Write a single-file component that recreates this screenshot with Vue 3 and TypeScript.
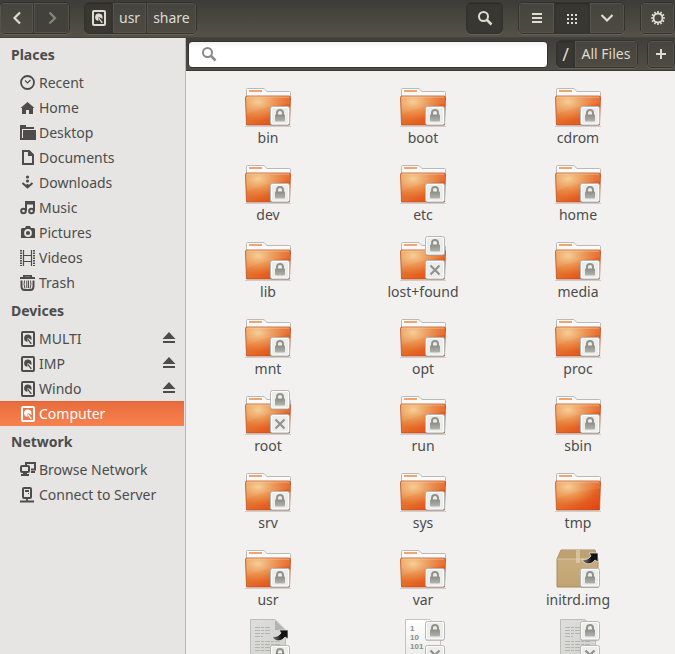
<script setup lang="ts">
import { ref } from 'vue'

interface Place {
  name: string
  icon: string
  eject?: boolean
}
interface Section {
  title: string
  places: Place[]
}
interface Entry {
  name: string
  kind: 'folder' | 'package' | 'text' | 'binary'
  top?: 'lock' | 'link'
  bottom?: 'lock' | 'cross'
}

const sections: Section[] = [
  {
    title: 'Places',
    places: [
      { name: 'Recent', icon: 'clock' },
      { name: 'Home', icon: 'home' },
      { name: 'Desktop', icon: 'desktop' },
      { name: 'Documents', icon: 'document' },
      { name: 'Downloads', icon: 'download' },
      { name: 'Music', icon: 'music' },
      { name: 'Pictures', icon: 'camera' },
      { name: 'Videos', icon: 'film' },
      { name: 'Trash', icon: 'trash' },
    ],
  },
  {
    title: 'Devices',
    places: [
      { name: 'MULTI', icon: 'disk', eject: true },
      { name: 'IMP', icon: 'disk', eject: true },
      { name: 'Windo', icon: 'disk', eject: true },
      { name: 'Computer', icon: 'disk' },
    ],
  },
  {
    title: 'Network',
    places: [
      { name: 'Browse Network', icon: 'network' },
      { name: 'Connect to Server', icon: 'server' },
    ],
  },
]

const folder = (name: string): Entry => ({ name, kind: 'folder', bottom: 'lock' })
const closedFolder = (name: string): Entry => ({ name, kind: 'folder', top: 'lock', bottom: 'cross' })

const entries: Entry[] = [
  ...['bin', 'boot', 'cdrom', 'dev', 'etc', 'home', 'lib'].map(folder),
  closedFolder('lost+found'),
  ...['media', 'mnt', 'opt', 'proc'].map(folder),
  closedFolder('root'),
  ...['run', 'sbin', 'srv', 'sys'].map(folder),
  { name: 'tmp', kind: 'folder' },
  folder('usr'),
  folder('var'),
  { name: 'initrd.img', kind: 'package', top: 'link', bottom: 'lock' },
  { name: '', kind: 'text', top: 'link', bottom: 'lock' },
  { name: '', kind: 'binary', top: 'lock', bottom: 'cross' },
  { name: '', kind: 'text', top: 'lock', bottom: 'cross' },
]

const current = ref('Computer')
const query = ref('')
</script>

<template>
  <svg class="defs" aria-hidden="true">
    <defs>
      <linearGradient id="folderFront" x1="0" y1="0" x2="1" y2="1">
        <stop offset="0" stop-color="#e58a3c" />
        <stop offset=".5" stop-color="#e56c2a" />
        <stop offset="1" stop-color="#e2400f" />
      </linearGradient>
      <radialGradient id="folderGlow" cx=".28" cy=".2" r=".65">
        <stop offset="0" stop-color="#f7d49a" stop-opacity=".9" />
        <stop offset="1" stop-color="#f0a860" stop-opacity="0" />
      </radialGradient>
      <linearGradient id="paper" x1="0" y1="0" x2="0" y2="1">
        <stop offset="0" stop-color="#fff" />
        <stop offset="1" stop-color="#e6e6e4" />
      </linearGradient>
      <linearGradient id="greyPaper" x1="0" y1="0" x2="1" y2="1">
        <stop offset="0" stop-color="#dededc" />
        <stop offset="1" stop-color="#cfcfcc" />
      </linearGradient>
      <linearGradient id="carton" x1="0" y1="0" x2="0" y2="1">
        <stop offset="0" stop-color="#cbb082" />
        <stop offset="1" stop-color="#c2a473" />
      </linearGradient>
      <linearGradient id="glyph" x1="0" y1="0" x2="0" y2="1">
        <stop offset="0" stop-color="#8d8d88" />
        <stop offset="1" stop-color="#b3b3ae" />
      </linearGradient>
      <linearGradient id="arrow" x1="0" y1="0" x2="1" y2="0">
        <stop offset="0" stop-color="#888" />
        <stop offset=".6" stop-color="#111" />
      </linearGradient>
    </defs>

    <symbol id="clock" viewBox="0 0 16 16">
      <circle cx="7.5" cy="7.5" r="6.5" fill="none" stroke="currentColor" stroke-width="1.8" />
      <path d="M5 5.5 7.5 8l3-3" fill="none" stroke="currentColor" stroke-width="1.2" />
    </symbol>
    <symbol id="home" viewBox="0 0 16 16">
      <path d="M7.5 2 .5 8H2v6h4v-4h3v4h4V8h1.500Z" fill="currentColor" />
    </symbol>
    <symbol id="desktop" viewBox="0 0 16 16">
      <path d="M0 0h6v2h8v2H2v9h1V5h13v10H0Z" fill="currentColor" />
    </symbol>
    <symbol id="document" viewBox="0 0 16 16">
      <path d="M3 1h6l4 4v9H3Z" fill="none" stroke="currentColor" stroke-width="2" />
      <path d="M8 1v5h5V4L10 1Z" fill="currentColor" />
    </symbol>
    <symbol id="download" viewBox="0 0 16 16">
      <circle cx="7.5" cy="2" r="1.600" fill="currentColor" />
      <circle cx="7.5" cy="6" r="1.600" fill="currentColor" />
      <path d="M2.500 8 7.500 12.500l5-4.500M7.500 9v3" fill="none" stroke="currentColor" stroke-width="2" />
    </symbol>
    <symbol id="music" viewBox="0 0 16 16">
      <path d="M6 11V2h8v9M6 3.500h8" fill="none" stroke="currentColor" stroke-width="2" />
      <circle cx="3.500" cy="11" r="2.300" fill="none" stroke="currentColor" stroke-width="2" />
      <circle cx="11.500" cy="11" r="2.300" fill="none" stroke="currentColor" stroke-width="2" />
    </symbol>
    <symbol id="camera" viewBox="0 0 16 16">
      <path d="M2 3h3l1-2h4l1 2h3l1 1v9H1V4Z" fill="currentColor" />
      <circle cx="8" cy="8" r="3" fill="none" stroke="#e6e5e3" stroke-width="1.800" />
    </symbol>
    <symbol id="film" viewBox="0 0 16 16">
      <path d="M1 0v16M14 0v16" stroke="currentColor" stroke-width="2" stroke-dasharray="1.500 1" />
      <path d="M3.500 0v16M11.500 0v16M4 5.500h7.500M4 11.500h7.500" stroke="currentColor" stroke-width="1.200" fill="none" />
    </symbol>
    <symbol id="trash" viewBox="0 0 16 16">
      <path d="M4 2V.800h7V2M0 3h15" fill="none" stroke="currentColor" stroke-width="2" />
      <path d="M1.500 5.500v5.500q0 4 3 4h6q3 0 3-4V5.500" fill="none" stroke="currentColor" stroke-width="2" />
      <path d="M4.500 5.500q-1 4 .500 8M10.500 5.500q1 4-.500 8M6.800 5.500v7.500M8.500 5.500v7.500" fill="none" stroke="currentColor" />
    </symbol>
    <symbol id="disk" viewBox="0 0 16 16">
      <rect x="2" y="1" width="12" height="14" rx="1" fill="none" stroke="currentColor" stroke-width="2" />
      <path d="M7.500 10.800A3.700 3.700 0 1 1 11.500 7.500V9l-2.500-1.500-1.500-.500Z" fill="currentColor" />
      <path d="m7.500 7 4.500 5.500-1.500.500L8 9.500Z" fill="currentColor" />
    </symbol>
    <symbol id="network" viewBox="0 0 16 16">
      <path d="M6 3V1h9v6.500h-4" fill="none" stroke="currentColor" stroke-width="2" />
      <rect x="1" y="4" width="8" height="6" rx="1" fill="none" stroke="currentColor" stroke-width="2" />
      <path d="M3 10h4v2h2v2H1v-2h2ZM11 9h4v2h-4Z" fill="currentColor" />
    </symbol>
    <symbol id="server" viewBox="0 0 16 16">
      <rect x="3" y="1" width="8" height="10" rx="1" fill="none" stroke="currentColor" stroke-width="2" />
      <path d="M5 4h4M7 11v3M0 14.500h14" stroke="currentColor" stroke-width="1.800" />
      <path d="M8 6h1v1H8Z" fill="currentColor" />
    </symbol>
    <symbol id="eject" viewBox="0 0 16 16">
      <path d="M8 1 14.500 8h-13ZM2 10h12v2H2Z" fill="currentColor" />
    </symbol>
    <symbol id="chevronLeft" viewBox="0 0 16 16">
      <path d="M11 2.500 5.500 8l5.500 5.500" fill="none" stroke="currentColor" stroke-width="2.200" />
    </symbol>
    <symbol id="chevronRight" viewBox="0 0 16 16">
      <path d="M5.500 2.500 11 8l-5.500 5.500" fill="none" stroke="currentColor" stroke-width="2.200" />
    </symbol>
    <symbol id="chevronDown" viewBox="0 0 16 16">
      <path d="M2.500 5 8 10.500 13.500 5" fill="none" stroke="currentColor" stroke-width="2.200" />
    </symbol>
    <symbol id="search" viewBox="0 0 16 16">
      <circle cx="6.500" cy="6.500" r="4.500" fill="none" stroke="currentColor" stroke-width="2" />
      <path d="m9.500 9.500 5 5" stroke="currentColor" stroke-width="2.500" />
    </symbol>
    <symbol id="list" viewBox="0 0 16 16">
      <path d="M3 4h10M3 8h10M3 12h10" stroke="currentColor" stroke-width="2" />
    </symbol>
    <symbol id="dots" viewBox="0 0 16 16">
      <path d="M3 4h2v2H3ZM7 4h2v2H7ZM11 4h2v2h-2ZM3 8h2v2H3ZM7 8h2v2H7ZM11 8h2v2h-2ZM3 12h2v2H3ZM7 12h2v2H7ZM11 12h2v2h-2Z" fill="currentColor" />
    </symbol>
    <symbol id="gear" viewBox="0 0 16 16">
      <circle cx="8" cy="8" r="4.500" fill="none" stroke="currentColor" stroke-width="1.800" />
      <path d="M8 1v3M8 12v3M1 8h3M12 8h3M4.500 1.900 6 4.500M10 11.500l1.500 2.600M11.500 1.900 10 4.500M6 11.500l-1.500 2.600M1.900 4.500 4.500 6M11.500 10l2.600 1.500M14.100 4.500 11.500 6M4.500 10l-2.600 1.500" stroke="currentColor" stroke-width="1.600" />
    </symbol>
    <symbol id="plus" viewBox="0 0 16 16">
      <path d="M8 3v10M3 8h10" stroke="currentColor" stroke-width="2" />
    </symbol>

    <symbol id="folder" viewBox="0 0 48 48">
      <path d="M1 46.500h46" stroke="#000" stroke-opacity=".15" />
      <path d="M2.500 20V9.500q0-1 1-1H19q1 0 1.700.800l2.300 2.200h22.500q1 0 1 1V20Z" fill="#fafafa" stroke="#b9b9b7" />
      <path d="M5 10h13v2H5Z" fill="#f0a56e" />
      <path d="M1.500 17.500q0-1.500 1.500-1.500h42q1.500 0 1.500 1.500L45.500 45h-43Z" fill="url(#folderFront)" />
      <path d="M1.500 17.500q0-1.500 1.500-1.500h42q1.500 0 1.500 1.500L45.500 45h-43Z" fill="url(#folderGlow)" />
      <path d="M2 17h44v7Q24 25 2.500 34Z" fill="#fff" fill-opacity=".08" />
      <path d="M1.500 17.500q0-1.500 1.500-1.500h42q1.500 0 1.500 1.500L45.500 45h-43Z" fill="none" stroke="#ba4c1c" stroke-opacity=".75" />
      <path d="M3 17h42" stroke="#ffd9b0" stroke-opacity=".6" />
    </symbol>
    <symbol id="package" viewBox="0 0 48 48">
      <path d="M7 8h34l3 9v28H3V17Z" fill="url(#carton)" stroke="#a68b60" />
      <path d="M7 8.500h34l3 8.500H3Z" fill="#bda171" />
      <path d="M3.500 17h40" stroke="#ddc8a2" />
      <path d="M22 8h4v13h-4Z" fill="#e4d5b8" fill-opacity=".6" />
    </symbol>
    <symbol id="text" viewBox="0 0 48 48">
      <path d="M6.500.500H31L41.500 11v37h-35Z" fill="url(#greyPaper)" stroke="#bdbdba" />
      <path d="M31 1v10h10Z" fill="#b3b3b0" />
      <path d="M11 8.500h15M11 11.500h15M11 14.500h16M11 17.500h8M11 22.500h26M11 25.500h26M11 28.500h26M11 31.500h20" stroke="#b4b4b1" stroke-dasharray="5 1 3 1" />
    </symbol>
    <symbol id="binary" viewBox="0 0 48 48">
      <path d="M6.500.500H31L41.500 11v37h-35Z" fill="url(#paper)" stroke="#c3c3c0" />
    </symbol>

    <symbol id="plate" viewBox="0 0 20 20">
      <rect x=".500" y="1" width="19" height="19" rx="2" fill="#000" fill-opacity=".18" />
      <rect x=".500" y=".500" width="19" height="18.500" rx="2" fill="#fcfcfc" stroke="#b7b7b5" />
      <rect x="2" y="2" width="16" height="15.500" rx="1" fill="#ededeb" />
    </symbol>
    <symbol id="emblem-lock" viewBox="0 0 20 20">
      <use href="#plate" />
      <path d="M7 9V7q0-3 3-3t3 3v2" fill="none" stroke="#92928d" stroke-width="2" />
      <rect x="5" y="8.500" width="10" height="7" rx="1" fill="url(#glyph)" />
    </symbol>
    <symbol id="emblem-cross" viewBox="0 0 20 20">
      <use href="#plate" />
      <path d="m5.500 5.500 9 9m0-9-9 9" stroke="#92928d" stroke-width="2.200" />
    </symbol>
    <symbol id="emblem-link" viewBox="0 0 20 20">
      <path d="M2 11q5 2 9-3L9 5h9v9l-3-2q-4 5-9 3.500Q3 14.500 2 11Z" fill="url(#arrow)" stroke="#eee" stroke-opacity=".7" />
    </symbol>
  </svg>

  <div class="window">
    <header class="toolbar">
      <nav class="group" aria-label="History">
        <button class="tool back" aria-label="Back"><svg class="icon"><use href="#chevronLeft" /></svg></button>
        <button class="tool forward" aria-label="Forward" disabled><svg class="icon"><use href="#chevronRight" /></svg></button>
      </nav>
      <nav class="group path" aria-label="Location">
        <button class="tool crumb pressed" aria-label="Computer"><svg class="icon"><use href="#disk" /></svg></button>
        <button class="tool crumb">usr</button>
        <button class="tool crumb">share</button>
      </nav>
      <div class="actions">
        <div class="group"><button class="tool wide pressed" aria-label="Search"><svg class="icon"><use href="#search" /></svg></button></div>
        <div class="group">
          <button class="tool wide" aria-label="List view"><svg class="icon"><use href="#list" /></svg></button>
          <button class="tool wide pressed" aria-label="Icon view"><svg class="icon"><use href="#dots" /></svg></button>
          <button class="tool wide" aria-label="View options"><svg class="icon"><use href="#chevronDown" /></svg></button>
        </div>
        <div class="group"><button class="tool" aria-label="Settings"><svg class="icon"><use href="#gear" /></svg></button></div>
      </div>
    </header>

    <div class="body">
      <aside class="sidebar">
        <section v-for="section in sections" :key="section.title">
          <h2>{{ section.title }}</h2>
          <ul>
            <li v-for="place in section.places" :key="place.name" :class="{ selected: place.name === current }">
              <a href="#" @click.prevent="current = place.name">
                <svg class="icon"><use :href="'#' + place.icon" /></svg>
                <span>{{ place.name }}</span>
              </a>
              <button v-if="place.eject" class="eject" :aria-label="'Eject ' + place.name">
                <svg class="icon"><use href="#eject" /></svg>
              </button>
            </li>
          </ul>
        </section>
      </aside>

      <main>
        <div class="searchbar">
          <label class="field">
            <svg class="icon"><use href="#search" /></svg>
            <input v-model="query" type="text" aria-label="Search files" />
          </label>
          <div class="group filter">
            <button class="tool slash pressed">/</button>
            <button class="tool all">All Files</button>
          </div>
          <div class="group"><button class="tool add" aria-label="Add filter"><svg class="icon"><use href="#plus" /></svg></button></div>
        </div>
        <div class="files">
          <button v-for="(entry, i) in entries" :key="i" class="file" :aria-label="entry.name || 'File'">
            <svg class="picture" viewBox="0 0 48 48">
              <use :href="'#' + entry.kind" width="48" height="48" />
              <g v-if="entry.kind === 'binary'" class="digits">
                <text x="11" y="12">1</text>
                <text x="11" y="21">10</text>
                <text x="11" y="30">101</text>
              </g>
              <use v-if="entry.top === 'lock'" href="#emblem-lock" x="26" y="2" width="20" height="20" />
              <use v-if="entry.top === 'link'" href="#emblem-link" x="26" y="6" width="20" height="20" />
              <use v-if="entry.bottom" :href="'#emblem-' + entry.bottom" x="26" y="26" width="20" height="20" />
            </svg>
            <span>{{ entry.name }}</span>
          </button>
        </div>
      </main>
    </div>
  </div>
</template>

<style>
body {
  margin: 0;
  overflow: hidden;
}
</style>

<style scoped>
.defs {
  position: absolute;
  width: 0;
  height: 0;
}
.digits {
  font: bold 8px "Liberation Sans", sans-serif;
  fill: #8b8b88;
}
.window {
  display: flex;
  flex-direction: column;
  height: 100vh;
  overflow: hidden;
  background: #f2f1f0;
  color: #4c4c4c;
  font-family: "Noto Sans", "Open Sans", sans-serif;
  font-size: 14px;
  line-height: 20px;
}
button {
  box-sizing: border-box;
  margin: 0;
  padding: 0;
  border: 0;
  background: none;
  color: inherit;
  font: inherit;
}
.icon {
  display: block;
  flex: none;
  width: 16px;
  height: 16px;
}
.toolbar {
  box-sizing: border-box;
  display: flex;
  flex: none;
  height: 38px;
  padding: 2px 0 3px;
  border-bottom: 1px solid #46443d;
  background: linear-gradient(#3d3c37, #545248);
  color: #dfdbd2;
}
.group {
  display: flex;
  box-sizing: border-box;
  height: 32px;
  border: 1px solid #33322d;
  border-radius: 5px;
  overflow: hidden;
  box-shadow: 0 1px 0 #66635a;
}
.tool {
  display: flex;
  align-items: center;
  justify-content: center;
  width: 33px;
  border-left: 1px solid #35342f;
  background: linear-gradient(#45443e, #4d4b43);
  box-shadow: inset 0 0 0 1px #55534b;
}
.tool:first-child {
  border-left: 0;
}
.tool.wide {
  width: 35px;
}
.tool.pressed {
  background: #383731;
  box-shadow: inset 0 1px 2px #2c2b27;
}
.back {
  width: 33px;
}
.forward {
  width: 36px;
  background: #42413b;
  color: #88857c;
}
.group:first-child {
  border-left: 0;
}
.actions .group:first-child {
  border-left: 1px solid #33322d;
}
.path {
  margin-left: 14px;
}
.crumb {
  width: auto;
  padding: 0 6px;
}
.crumb:first-child {
  width: 27px;
}
.actions {
  display: flex;
  gap: 15px;
  margin-left: auto;
}
.body {
  display: flex;
  flex: 1;
  min-height: 0;
}
.sidebar {
  box-sizing: border-box;
  flex: none;
  width: 186px;
  padding-top: 1px;
  border-right: 1px solid #bab8b5;
  background: #e6e5e3;
}
.sidebar h2 {
  margin: 0;
  padding-left: 11px;
  font-size: 14px;
  line-height: 31px;
}
.sidebar ul {
  margin: 0;
  padding: 0;
  list-style: none;
}
.sidebar li {
  display: flex;
  align-items: center;
  height: 25px;
  padding: 0 7px 0 20px;
  margin-right: 1px;
}
.sidebar a {
  display: flex;
  flex: 1;
  align-items: center;
  gap: 3px;
  color: inherit;
  text-decoration: none;
  white-space: nowrap;
}
.sidebar .selected {
  background: linear-gradient(#e96b3b, #f6824f);
  box-shadow: inset 0 1px 0 #df6538;
  color: #fff;
}
main {
  display: flex;
  flex: 1;
  flex-direction: column;
  min-width: 0;
}
.searchbar {
  box-sizing: border-box;
  display: flex;
  flex: none;
  align-items: center;
  height: 33px;
  padding: 0 0 0 2px;
  border-bottom: 1px solid #3a3934;
  background: linear-gradient(#3f3e39, #504e46);
  color: #dfdbd2;
}
.field {
  display: flex;
  flex: 1;
  box-sizing: border-box;
  align-items: center;
  height: 27px;
  padding-left: 12px;
  border: 1px solid #33322d;
  border-radius: 4px;
  background: linear-gradient(#f3f3f3, #fff 6px);
  color: #8a8a88;
}
.field input {
  flex: 1;
  min-width: 0;
  border: 0;
  outline: 0;
  background: none;
  color: #4c4c4c;
  font: inherit;
}
.searchbar .group {
  height: 28px;
  border-left: 1px solid #33322d;
}
.filter {
  margin: 0 9px 0 8px;
}
.slash {
  width: 17px;
  font-size: 18px;
}
.all {
  width: 63px;
}
.add {
  width: 26px;
}
.files {
  display: grid;
  flex: 1;
  grid-template-columns: repeat(auto-fill, 154px);
  align-content: start;
  gap: 9px 1px;
  min-height: 0;
  padding: 9px 5px 0;
  overflow: hidden;
}
.file {
  display: flex;
  flex-direction: column;
  align-items: center;
  height: 68px;
}
.picture {
  display: block;
  flex: none;
  width: 48px;
  height: 48px;
}
</style>
